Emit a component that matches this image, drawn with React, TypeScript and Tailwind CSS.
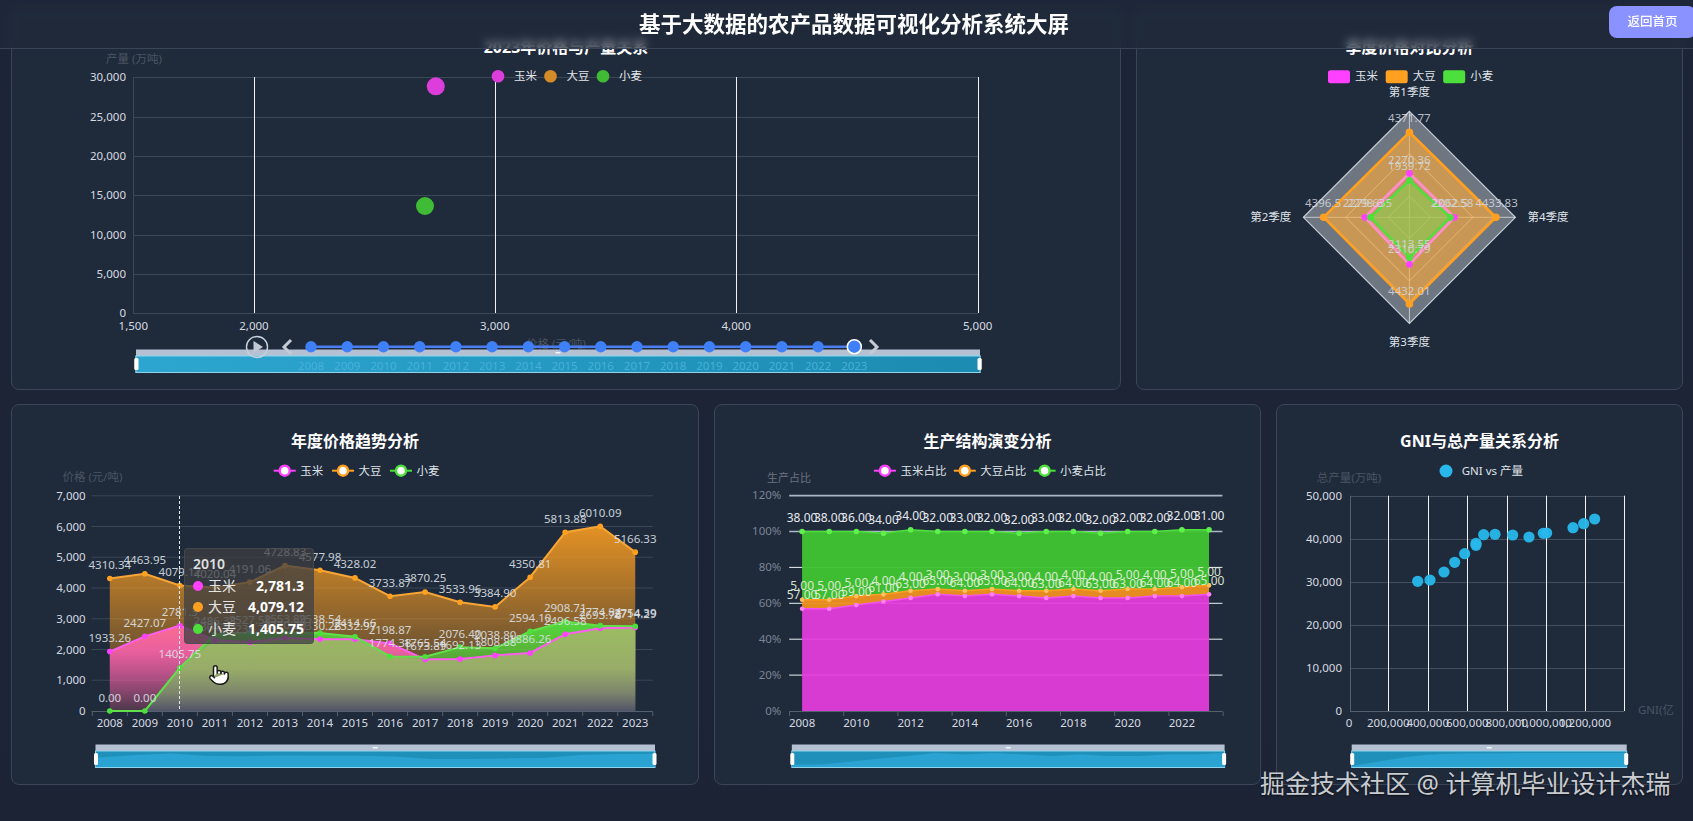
import React from "react";
import { Pointer } from "lucide-react";

const MAG = "#ff40ff";
const ORG = "#ffa020";
const GRN = "#4de03c";

type TP = { x: number; y: number; a?: "start" | "middle" | "end"; c?: string; s?: number; o?: number; children: React.ReactNode };
const T = ({ x, y, a = "middle", c = "#d6dae0", s = 12, o = 1, children }: TP) => (
  <text x={x} y={y} textAnchor={a} dominantBaseline="central" fill={c} fontSize={s} opacity={o}>
    {children}
  </text>
);

const crisp = (x: number) => Math.round(x) + 0.5;

function Card({ x, y, w, h, title, children, over }: { x: number; y: number; w: number; h: number; title: string; children: React.ReactNode; over?: React.ReactNode }) {
  return (
    <section className="relative rounded-lg border border-[#3a4657] bg-[#1f2a3b]" style={{ height: h }}>
      <h3 className="pt-6 text-center text-base leading-6 font-bold text-white">{title}</h3>
      <svg viewBox={`${x + 1} ${y + 49} ${w - 2} ${h - 50}`} width={w - 2} height={h - 50} className="block overflow-visible">
        {children}
      </svg>
      {over}
    </section>
  );
}

function Slider({ x0, x1, y = 744.5, spark }: { x0: number; x1: number; y?: number; spark?: number[] }) {
  const top = y + 6.5;
  const bot = y + 23;
  const w = x1 - x0;
  const pts = spark ? spark.map((v, i) => `${x0 + (i * w) / (spark.length - 1)},${v}`).join(" ") : "";
  return (
    <g>
      <rect x={x0} y={y} width={w} height={6.5} fill="#b5c1d3" />
      <rect x={x0} y={top} width={w} height={bot - top} fill="#1f90b9" stroke="#8fd3ec" strokeWidth={1} />
      {spark && <polygon points={`${x0},${bot - 0.5} ${pts} ${x1},${bot - 0.5}`} fill="#2ba3d2" />}
      <rect x={x0 + w / 2 - 2.5} y={y + 2.5} width={5} height={1.5} fill="#f3f5f8" />
      <rect x={x0 - 1.5} y={top + 2} width={4} height={12} rx={1.5} fill="#ffffff" />
      <rect x={x1 - 2.5} y={top + 2} width={4} height={12} rx={1.5} fill="#ffffff" />
    </g>
  );
}

function LineLegend({ x, y, label, c }: { x: number; y: number; label: string; c: string }) {
  return (
    <g>
      <line x1={x} x2={x + 22} y1={y} y2={y} stroke={c} strokeWidth={2} />
      <circle cx={x + 11} cy={y} r={5} fill="#ffffff" stroke={c} strokeWidth={2.5} />
      <T x={x + 26.5} y={y - 0.5} a="start" c="#dfe3e8" s={11.5}>{label}</T>
    </g>
  );
}

/* ---------- Chart 1: scatter by year ---------- */
function ScatterYear() {
  const ys = [[30000, 77.3], [25000, 117], [20000, 155.7], [15000, 195], [10000, 234.7], [5000, 274], [0, 313.3]] as const;
  const xs = [[2000, 254], [3000, 494.8], [4000, 736.2], [5000, 977.6]] as const;
  const years = Array.from({ length: 16 }, (_, i) => 2008 + i);
  return (
    <>
      <T x={134} y={58} c="#4b5563" s={11.5}>产量 (万吨)</T>
      {ys.map(([v, y]) => (
        <g key={v}>
          <line x1={133} x2={978} y1={crisp(y)} y2={crisp(y)} stroke="#3c4758" strokeWidth={1} />
          <T x={126} y={y - 0.5} a="end" s={11.5}>{v.toLocaleString("en-US")}</T>
        </g>
      ))}
      <line x1={133.5} x2={133.5} y1={77} y2={313} stroke="#3c4758" />
      {xs.map(([v, x]) => (
        <g key={v}>
          <line x1={crisp(x)} x2={crisp(x)} y1={77} y2={313} stroke="#f2f4f7" />
          <T x={x} y={325} s={11.5}>{v.toLocaleString("en-US")}</T>
        </g>
      ))}
      <T x={133.3} y={325} s={11.5}>1,500</T>
      {[["玉米", 498, "#dd3edb"], ["大豆", 550.5, "#d58c28"], ["小麦", 603, "#3fbb35"]].map(([n, x, c]) => (
        <g key={n as string}>
          <circle cx={x as number} cy={76.3} r={6.3} fill={c as string} />
          <T x={(x as number) + 16} y={75.5} a="start" c="#e3e6ea" s={11.5}>{n}</T>
        </g>
      ))}
      <circle cx={435.8} cy={86.3} r={9} fill="#dd3edb" />
      <circle cx={425} cy={206} r={9} fill="#3fbb35" />
      <T x={556} y={343} c="#4b5563" s={11.5}>价格 (元/吨)</T>
      <Slider x0={136} x1={980} y={349.5} />
      <linearGradient id="tlFade" x1="0" x2="1" y1="0" y2="0">
        <stop offset="0" stopColor="#2ca6d0" />
        <stop offset="1" stopColor="#1c8bb1" />
      </linearGradient>
      <rect x={136} y={356} width={844} height={16.5} fill="url(#tlFade)" stroke="#8fd3ec" strokeWidth={1} />
      <rect x={134.5} y={358} width={4} height={12} rx={1.5} fill="#fff" />
      <rect x={977.5} y={358} width={4} height={12} rx={1.5} fill="#fff" />
      {/* timeline */}
      <circle cx={257} cy={347} r={10.5} fill="none" stroke="#c9d1dc" strokeWidth={1.4} />
      <polygon points="253.5,341 253.5,353 263,347" fill="#c1c8d2" />
      <polyline points="291,340 284,347 291,354" fill="none" stroke="#c5cad4" strokeWidth={3} />
      <polyline points="870,340 877,347 870,354" fill="none" stroke="#c5cad4" strokeWidth={3} />
      <line x1={311} x2={854} y1={346.7} y2={346.7} stroke="#4a7df0" strokeWidth={2.5} />
      {years.map((yr, i) => {
        const x = 311 + i * 36.22;
        return (
          <g key={yr}>
            {i < 15 && <circle cx={x} cy={346.7} r={5.7} fill="#3f80f8" />}
            {i === 15 && <circle cx={x} cy={346.7} r={7} fill="#3f80f8" stroke="#ffffff" strokeWidth={1.6} />}
            <T x={x} y={365} c="#4db4dc" s={11.5} o={0.9}>{yr}</T>
          </g>
        );
      })}
    </>
  );
}

/* ---------- Chart 2: radar ---------- */
function Radar() {
  const cx = 1409.4;
  const cy = 217.3;
  const d = (t: number, r: number, b: number, l: number) => `${cx},${cy - t} ${cx + r},${cy} ${cx},${cy + b} ${cx - l},${cy}`;
  const R = 106;
  return (
    <>
      {[["玉米", 1328, MAG], ["大豆", 1385.7, ORG], ["小麦", 1443.2, GRN]].map(([n, x, c]) => (
        <g key={n as string}>
          <rect x={x as number} y={70.3} width={22} height={13} rx={2.5} fill={c as string} />
          <T x={(x as number) + 27} y={75.5} a="start" c="#dfe3e8" s={11.5}>{n}</T>
        </g>
      ))}
      <polygon points={d(R, R, R, R)} fill="#6e7682" stroke="#c6ced9" strokeWidth={1.2} />
      {[0.2, 0.4, 0.6, 0.8].map((k) => (
        <polygon key={k} points={d(R * k, R * k, R * k, R * k)} fill="none" stroke="#d8dde4" strokeWidth={0.8} />
      ))}
      <line x1={cx} x2={cx} y1={cy - R} y2={cy + R} stroke="#d8dde4" strokeWidth={0.8} />
      <line x1={cx - R} x2={cx + R} y1={cy} y2={cy} stroke="#d8dde4" strokeWidth={0.8} />
      <polygon points={d(85, 86.5, 86.7, 85.8)} fill="#ffab3c" fillOpacity={0.62} stroke={ORG} strokeWidth={2.6} />
      <polygon points={d(44, 45, 47, 44.6)} fill={MAG} fillOpacity={0.15} stroke="#ff8fc8" strokeWidth={2.6} />
      <polygon points={d(37, 41, 40.4, 39)} fill="#64f032" fillOpacity={0.45} stroke={GRN} strokeWidth={2.4} />
      {[[0, -85], [86.5, 0], [0, 86.7], [-85.8, 0]].map(([a, b], i) => (
        <circle key={i} cx={cx + a} cy={cy + b} r={3.8} fill={ORG} />
      ))}
      {[[0, -44], [45, 0], [0, 47], [-44.6, 0]].map(([a, b], i) => (
        <circle key={i} cx={cx + a} cy={cy + b} r={3.4} fill={MAG} />
      ))}
      {[[0, -37], [41, 0], [0, 40.4], [-39, 0]].map(([a, b], i) => (
        <circle key={i} cx={cx + a} cy={cy + b} r={3.4} fill={GRN} />
      ))}
      <T x={cx} y={91} c="#dfe3e8" s={11.5}>第1季度</T>
      <T x={cx} y={341} c="#dfe3e8" s={11.5}>第3季度</T>
      <T x={1270.8} y={216.5} c="#dfe3e8" s={11.5}>第2季度</T>
      <T x={1548} y={216.5} c="#dfe3e8" s={11.5}>第4季度</T>
      {[
        ["4371.77", cx, 117.3],
        ["2270.36", cx, 159],
        ["1939.72", cx, 165.7],
        ["4396.5", 1323, 202.7],
        ["2279.635", 1367.4, 202.7],
        ["2298.6", 1365, 202.7],
        ["2202.58", 1452, 202.7],
        ["2062.5", 1450, 202.7],
        ["4433.83", 1496.5, 202.7],
        ["2113.55", cx, 243.3],
        ["2310.79", cx, 248.7],
        ["4432.01", cx, 290],
      ].map(([t, x, y]) => (
        <T key={t as string} x={x as number} y={y as number} c="#d5d9de" s={11.5} o={0.85}>{t}</T>
      ))}
    </>
  );
}

/* ---------- Chart 3: yearly prices ---------- */
const corn = [1933.26, 2427.07, 2781.3, 2304.53, 2236.7, 2370.2, 2330.28, 2332.97, 2198.87, 1673.89, 1692.13, 1808.88, 1886.26, 2496.58, 2693.76, 2714.29];
const soy = [4310.34, 4463.95, 4079.12, 4020.04, 4191.06, 4728.83, 4577.98, 4328.02, 3733.87, 3870.25, 3533.96, 3384.9, 4350.81, 5813.88, 6010.09, 5166.33];
const wheat = [0, 0, 1405.75, 2486.38, 2527.58, 2553.89, 2538.54, 2414.66, 1774.38, 1765.54, 2076.4, 2038.8, 2594.1, 2908.71, 2774.84, 2754.39];

function PriceTrend() {
  const X = (i: number) => 109.8 + i * 35.03;
  const Y = (v: number) => 711 - v * 0.03075;
  const path = (a: number[]) => a.map((v, i) => `${X(i)},${Y(v)}`).join(" ");
  const area = (a: number[]) => `${X(0)},711 ${path(a)} ${X(15)},711`;
  const series: [number[], string, string, string][] = [
    [corn, MAG, "gCorn", "#ff5cf0"],
    [soy, ORG, "gSoy", "#f7a535"],
    [wheat, GRN, "gWheat", "#62e04a"],
  ];
  const under = corn.map((v, i) => Math.min(v, wheat[i]));
  return (
    <>
      <defs>
        <linearGradient id="gCorn" x1="0" x2="0" y1="0" y2="1">
          <stop offset="0" stopColor="#ff40ff" stopOpacity={0.95} />
          <stop offset="0.3" stopColor="#ff40ff" stopOpacity={0.85} />
          <stop offset="1" stopColor="#ff40ff" stopOpacity={0.1} />
        </linearGradient>
        <linearGradient id="gSoy" x1="0" x2="0" y1="0" y2="1">
          <stop offset="0" stopColor="#ffa020" stopOpacity={0.88} />
          <stop offset="1" stopColor="#ffa020" stopOpacity={0.1} />
        </linearGradient>
        <linearGradient id="gWheat" x1="0" x2="0" y1="0" y2="1">
          <stop offset="0" stopColor="#4de03c" stopOpacity={0.95} />
          <stop offset="1" stopColor="#4de03c" stopOpacity={0.1} />
        </linearGradient>
        <linearGradient id="gBlend" gradientUnits="userSpaceOnUse" x1="0" x2="0" y1={Y(2750)} y2={711}>
          <stop offset="0" stopColor="#9bbd62" />
          <stop offset="0.5" stopColor="#98ac68" />
          <stop offset="0.78" stopColor="#7d866c" />
          <stop offset="1" stopColor="#525468" />
        </linearGradient>
      </defs>
      <T x={92.5} y={476.7} c="#4b5563" s={11.5}>价格 (元/吨)</T>
      <LineLegend x={273.7} y={470.7} label="玉米" c={MAG} />
      <LineLegend x={332} y={470.7} label="大豆" c={ORG} />
      <LineLegend x={390} y={470.7} label="小麦" c={GRN} />
      {[0, 1000, 2000, 3000, 4000, 5000, 6000, 7000].map((v) => (
        <g key={v}>
          {v > 0 && <line x1={91.5} x2={652.7} y1={Y(v)} y2={Y(v)} stroke="#3a4556" strokeWidth={1.2} />}
          <T x={85.7} y={Y(v) - 0.5} a="end" s={11.5}>{v.toLocaleString("en-US")}</T>
        </g>
      ))}
      <line x1={91.5} x2={652.7} y1={711.5} y2={711.5} stroke="#55606f" />
      {Array.from({ length: 17 }, (_, i) => (
        <line key={i} x1={92.3 + i * 35.03} x2={92.3 + i * 35.03} y1={711.5} y2={716} stroke="#55606f" />
      ))}
      {series.map(([a, c, g]) => (
        <polygon key={g} points={area(a)} fill={`url(#${g})`} />
      ))}
      <polygon points={area(under)} fill="url(#gBlend)" />
      {series.map(([a, c, g, pc]) => (
        <g key={g + "l"}>
          <polyline points={path(a)} fill="none" stroke={pc} strokeWidth={2} />
          {a.map((v, i) => (
            <circle key={i} cx={X(i)} cy={Y(v)} r={2.8} fill={c} />
          ))}
        </g>
      ))}
      <line x1={179.5} x2={179.5} y1={496} y2={711} stroke="#e5e7eb" strokeDasharray="3 2" />
      {series.map(([a, c, g]) =>
        a.map((v, i) => (
          <T key={g + i} x={X(i)} y={Y(v) - 14} c="#dfe3e8" s={11.5} o={0.88}>
            {v === 0 ? "0.00" : v === 2781.3 ? "2781.3" : v.toFixed(2)}
          </T>
        ))
      )}
      {Array.from({ length: 16 }, (_, i) => (
        <T key={i} x={X(i)} y={722} s={11.5}>{2008 + i}</T>
      ))}
      <Slider x0={95.5} x1={655} spark={corn.map((v) => 767.5 - (v / 2781) * 14)} />
    </>
  );
}

/* ---------- Chart 4: stacked shares ---------- */
const sCorn = [57, 57, 59, 61, 63, 65, 64, 65, 64, 63, 64, 63, 63, 64, 64, 65];
const sSoy = [5, 5, 5, 4, 4, 3, 3, 3, 3, 4, 4, 4, 5, 4, 5, 5];
const sWheat = [38, 38, 36, 34, 34, 32, 33, 32, 32, 33, 32, 32, 32, 32, 32, 31];

function Shares() {
  const X = (i: number) => 802.1 + i * 27.13;
  const Y = (v: number) => 711 - v * 1.795;
  const s1 = sCorn;
  const s2 = sCorn.map((v, i) => v + sSoy[i]);
  const s3 = s2.map((v, i) => v + sWheat[i]);
  const pl = (a: number[]) => a.map((v, i) => `${X(i)},${Y(v)}`);
  const band = (top: number[], bottom: number[] | null) => {
    const t = pl(top);
    const b = bottom ? pl(bottom).reverse() : [`${X(15)},711`, `${X(0)},711`];
    return [...t, ...b].join(" ");
  };
  return (
    <>
      <T x={789} y={477} c="#6b7280" s={11}>生产占比</T>
      <LineLegend x={873.9} y={470.7} label="玉米占比" c={MAG} />
      <LineLegend x={953.8} y={470.7} label="大豆占比" c={ORG} />
      <LineLegend x={1033.6} y={470.7} label="小麦占比" c={GRN} />
      {[0, 20, 40, 60, 80, 100, 120].map((v) => (
        <g key={v}>
          {v > 0 && <line x1={789.2} x2={1222.4} y1={Y(v)} y2={Y(v)} stroke={v >= 100 ? "#aab6c6" : "#eef1f5"} strokeWidth={v >= 100 ? 1.6 : 1} />}
          <T x={781.4} y={Y(v) - 1} a="end" c="#7b8494" s={11.5}>{`${v}%`}</T>
        </g>
      ))}
      <polygon points={band(s3, s2)} fill="#41c432" fillOpacity={0.96} />
      <polygon points={band(s2, s1)} fill="#ee9020" fillOpacity={0.96} />
      <polygon points={band(s1, null)} fill="#e63cde" fillOpacity={0.93} />
      <polyline points={pl(s1).join(" ")} fill="none" stroke="#f352ef" strokeWidth={1.5} />
      <polyline points={pl(s2).join(" ")} fill="none" stroke={ORG} strokeWidth={1.5} />
      <polyline points={pl(s3).join(" ")} fill="none" stroke={GRN} strokeWidth={1.5} />
      <line x1={789.2} x2={1222.4} y1={711.5} y2={711.5} stroke="#55606f" />
      {Array.from({ length: 9 }, (_, i) => (
        <line key={i} x1={789.5 + i * 54.2} x2={789.5 + i * 54.2} y1={711.5} y2={716} stroke="#55606f" />
      ))}
      {([[s1, "#ff80f5", sCorn], [s2, "#ffc060", sSoy], [s3, "#5ff04c", sWheat]] as const).map(([a, c, lab], n) =>
        a.map((v, i) => (
          <g key={`${n}-${i}`}>
            <circle cx={X(i)} cy={Y(v)} r={n === 2 ? 2.8 : 2.3} fill={c} />
            <T x={X(i)} y={Y(v) - 14} c={n === 2 ? "#e6e9ee" : "#e3efdc"} s={12} o={n === 2 ? 1 : 0.92}>{lab[i].toFixed(2)}</T>
          </g>
        ))
      )}
      {Array.from({ length: 8 }, (_, i) => (
        <T key={i} x={X(i * 2)} y={722} s={11.5}>{2008 + i * 2}</T>
      ))}
      <Slider x0={791.8} x1={1224.6} spark={sCorn.map((v) => 767.5 - ((v - 55) / 10) * 14.5)} />
    </>
  );
}

/* ---------- Chart 5: GNI scatter ---------- */
function Gni() {
  const Y = (v: number) => 711 - v * 0.0043;
  const lines = [1388.3, 1427.7, 1467.3, 1506.7, 1545.7, 1585, 1624.3];
  const labels = ["200,000", "400,000", "600,000", "800,000", "1,000,000", "1,200,000"];
  const pts = [[443, 544], [480, 540], [522, 516], [554, 487], [584, 461], [618, 430], [618, 436], [641, 404], [675, 403], [728, 405], [777, 411], [820, 400], [830, 399], [909, 383], [941, 371], [974, 357]];
  return (
    <>
      <T x={1349} y={477} c="#4b5563" s={11.5}>总产量(万吨)</T>
      <circle cx={1446} cy={471} r={6.5} fill="#28b8ec" />
      <T x={1461.7} y={470} a="start" c="#dfe3e8" s={11.5}>GNI vs 产量</T>
      {[0, 10000, 20000, 30000, 40000, 50000].map((v) => (
        <g key={v}>
          <line x1={1350} x2={1624.3} y1={crisp(Y(v))} y2={crisp(Y(v))} stroke={v === 0 ? "#55606f" : "#434e5e"} strokeWidth={1} />
          <T x={1342} y={Y(v) - 0.5} a="end" s={11.5}>{v.toLocaleString("en-US")}</T>
        </g>
      ))}
      <line x1={1350.5} x2={1350.5} y1={495.7} y2={711} stroke="#55606f" />
      {lines.map((x) => (
        <line key={x} x1={crisp(x)} x2={crisp(x)} y1={495.7} y2={711} stroke="#f2f4f7" strokeWidth={1} />
      ))}
      <T x={1349} y={722} s={11.5}>0</T>
      {labels.map((l, i) => (
        <T key={l} x={lines[i]} y={722} s={11.5}>{l}</T>
      ))}
      <T x={1638} y={709} a="start" c="#4b5563" s={11.5}>GNI(亿</T>
      {pts.map(([a, b], i) => (
        <circle key={i} cx={1270 + a / 3} cy={400 + b / 3} r={5.6} fill="#28b8ec" fillOpacity={0.95} />
      ))}
      <Slider x0={1351.7} x1={1626.7} spark={[766, 763, 760, 757, 755, 754, 753.5, 753.5, 753.5, 753, 753, 753, 753, 753, 753, 753]} />
    </>
  );
}

function Tooltip() {
  const rows = [
    ["玉米", "2,781.3", "bg-[#ff40ff]"],
    ["大豆", "4,079.12", "bg-[#ffa020]"],
    ["小麦", "1,405.75", "bg-[#4de03c]"],
  ];
  return (
    <div className="absolute top-[143px] left-[172px] flex h-[96px] w-[130px] flex-col rounded border border-[#4a4d52]/70 bg-[#3e3f42]/75 pt-[6px] pr-[9px] pl-[8px] text-sm text-white">
      <div className="h-[20px] text-[14px] leading-[18px] font-semibold text-[#e0e0e0]">2010</div>
      {rows.map(([n, v, c]) => (
        <div key={n} className="flex h-[21.5px] items-center">
          <span className={`h-[10px] w-[10px] rounded-full ${c}`} />
          <span className="ml-[5px] text-[#e5e5e5]">{n}</span>
          <span className="ml-auto font-bold">{v}</span>
        </div>
      ))}
    </div>
  );
}

export default function App() {
  return (
    <div className="relative h-[821px] w-full overflow-hidden bg-gradient-to-b from-[#1c2537] to-[#1c2334] font-['Noto_Sans','Noto_Sans_CJK_SC',sans-serif]">
      <header className="absolute inset-x-0 top-0 z-10 flex h-[49px] items-center border-b border-[#3a4657] bg-[#1f2a3b]/60 backdrop-blur-[4px]">
        <h1 className="ml-[639px] text-[21.5px] leading-8 font-bold whitespace-nowrap text-white">基于大数据的农产品数据可视化分析系统大屏</h1>
        <button className="mt-[-4px] ml-auto -mr-[3px] h-[32px] w-[87px] rounded-lg bg-[#8a92ff] text-[12.5px] font-medium text-white">返回首页</button>
      </header>
      <main className="flex flex-col gap-[14px] pt-[10px] pr-[10px] pl-[11px]">
        <div className="grid grid-cols-[1110px_547px] gap-[15px]">
          <Card x={11} y={10} w={1110} h={380} title="2023年价格与产量关系">
            <ScatterYear />
          </Card>
          <Card x={1136} y={10} w={547} h={380} title="季度价格对比分析">
            <Radar />
          </Card>
        </div>
        <div className="grid grid-cols-[688px_547px_407px] gap-[15px]">
          <Card
            x={11}
            y={404}
            w={688}
            h={381}
            title="年度价格趋势分析"
            over={
              <>
                <Tooltip />
                <Pointer className="absolute top-[258px] left-[196px] h-[24px] w-[22px]" fill="#ffffff" stroke="#1a1a1a" strokeWidth={1.6} />
              </>
            }
          >
            <PriceTrend />
          </Card>
          <Card x={714} y={404} w={547} h={381} title="生产结构演变分析">
            <Shares />
          </Card>
          <Card x={1276} y={404} w={407} h={381} title="GNI与总产量关系分析">
            <Gni />
          </Card>
        </div>
      </main>
      <div className="absolute top-[769px] left-[1260px] z-20 text-[25px] leading-7 whitespace-nowrap text-[#c8cbcf] [text-shadow:0_1px_2px_rgba(0,0,0,0.6)]">
        掘金技术社区 @ 计算机毕业设计杰瑞
      </div>
    </div>
  );
}
